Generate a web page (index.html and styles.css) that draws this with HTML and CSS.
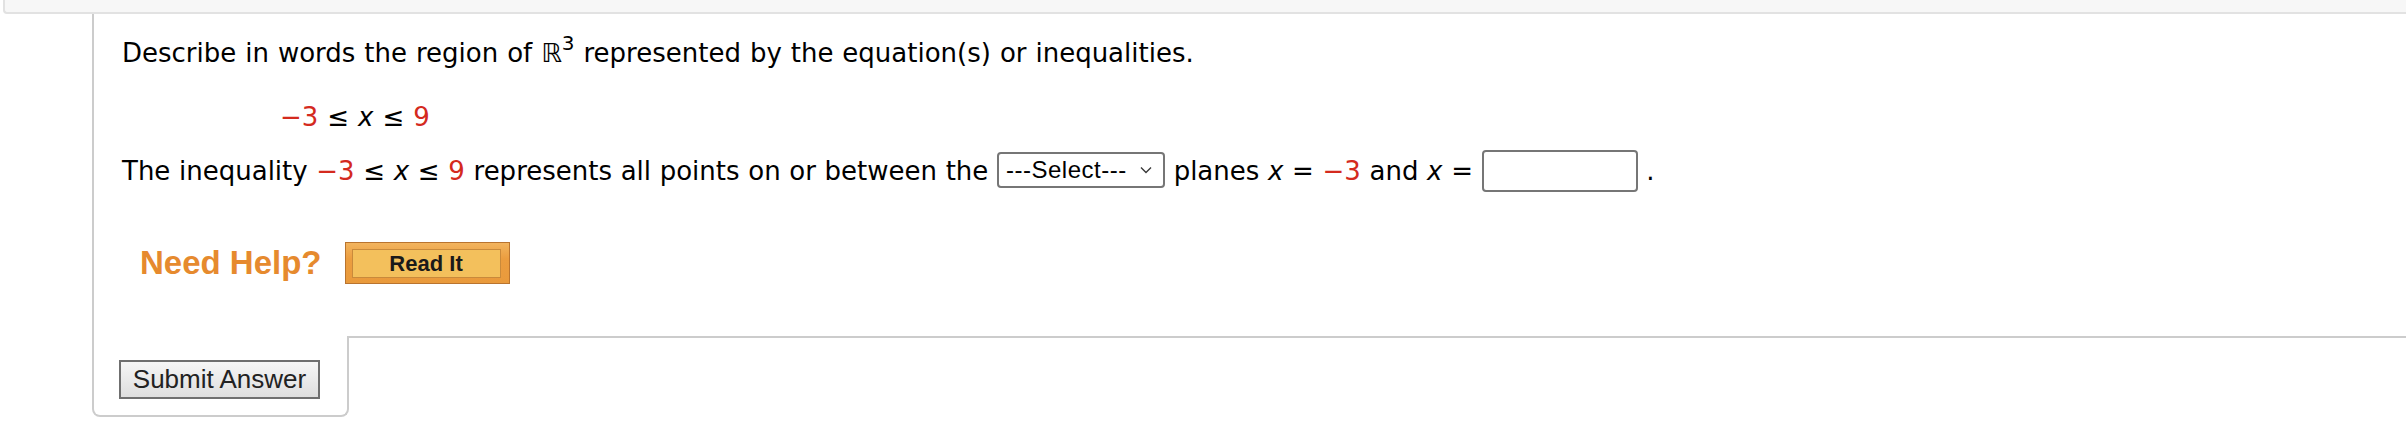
FILE: index.html
```html
<!DOCTYPE html>
<html lang="en">
<head>
<meta charset="utf-8">
<title>Question</title>
<link rel="stylesheet" href="styles.css">
</head>
<body>
<div class="topbar"></div>
<div class="card">
  <div class="question">
    <p class="prompt">Describe in words the region of <span class="bb">ℝ</span><sup class="sup">3</sup> represented by the equation(s) or inequalities.</p>
    <p class="eq"><span class="red">−3</span> ≤ <i>x</i> ≤ <span class="red">9</span></p>
    <p class="answer">The inequality <span class="red">−3</span> ≤ <i>x</i> ≤ <span class="red">9</span> represents all points on or between the <span class="select"><span class="select-text">---Select---</span><svg class="chev" width="12" height="8" viewBox="0 0 12 8"><polyline points="1,1.5 6,6.5 11,1.5" fill="none" stroke="#3a3a3a" stroke-width="1.4"/></svg></span> planes <i>x</i> = <span class="red">−3</span> and <i>x</i> = <span class="input"></span> .</p>
    <div class="help">
      <span class="need">Need Help?</span>
      <span class="readit"><span class="readit-inner">Read It</span></span>
    </div>
  </div>
  <div class="bottom">
    <div class="submit-area"><button class="submit" type="button">Submit Answer</button></div>
    <div class="extra"></div>
  </div>
</div>
</body>
</html>
```
FILE: styles.css
```css
html, body {
  margin: 0;
  padding: 0;
  background: #ffffff;
}
body {
  font-family: "DejaVu Sans", Verdana, sans-serif;
  font-size: 26px;
  color: #000000;
  overflow: hidden;
  width: 2406px;
  height: 425px;
}
.topbar {
  height: 12px;
  margin-left: 3px;
  background: #f7f7f7;
  border-left: 2px solid #e2e2e2;
  border-bottom: 2px solid #e2e2e2;
  border-bottom-left-radius: 4px;
}
.card {
  margin-left: 92px;
}
.question {
  border-left: 2px solid #cccccc;
  padding: 24px 0 0 28px;
  height: 322px;
  box-sizing: border-box;
  word-spacing: 0.7px;
}
.question p {
  margin: 0;
}
.prompt {
  line-height: 30px;
}
.bb {
  font-family: "DejaVu Sans", sans-serif;
  font-weight: normal;
}
.sup {
  font-size: 20px;
  line-height: 0;
  vertical-align: 12px;
}
.eq {
  margin-top: 34px !important;
  padding-left: 158px;
  line-height: 30px;
}
.red {
  color: #d42a1e;
}
i {
  font-style: italic;
}
.answer {
  margin-top: 18px !important;
  line-height: 30px;
  word-spacing: 0.4px;
}
.select {
  display: inline-flex;
  align-items: center;
  justify-content: space-between;
  box-sizing: border-box;
  width: 168px;
  height: 36px;
  border: 2px solid #767676;
  border-radius: 4px;
  padding: 0 11px 0 7px;
  font-family: "Liberation Sans", Arial, sans-serif;
  font-size: 24px;
  letter-spacing: 0.5px;
  word-spacing: 0;
  line-height: 32px;
  vertical-align: 2px;
  color: #000;
  background: #fff;
}
.chev {
  display: block;
}
.input {
  display: inline-block;
  box-sizing: border-box;
  width: 156px;
  height: 42px;
  border: 2px solid #767676;
  border-radius: 4px;
  vertical-align: -12px;
  background: #fff;
}
.help {
  display: flex;
  align-items: center;
  margin-top: 50px;
  padding-left: 18px;
  gap: 23px;
  height: 42px;
  word-spacing: 0;
}
.need {
  font-family: "Liberation Sans", Arial, sans-serif;
  font-weight: bold;
  font-size: 33px;
  line-height: 42px;
  color: #e68a2e;
}
.readit {
  display: flex;
  box-sizing: border-box;
  width: 165px;
  height: 42px;
  padding: 6px 8px 5px 6px;
  border: 1px solid #b9742f;
  background: linear-gradient(#f2b45e, #eb9d3f 40%, #e99a3c);
}
.readit-inner {
  flex: 1;
  display: flex;
  align-items: center;
  justify-content: center;
  border: 1px solid #c98a3b;
  background: #f3c05c;
  font-family: "Liberation Sans", Arial, sans-serif;
  font-weight: bold;
  font-size: 22px;
  color: #1a1a1a;
}
.bottom {
  display: flex;
  height: 81px;
}
.submit-area {
  box-sizing: border-box;
  width: 257px;
  height: 81px;
  border-left: 2px solid #cccccc;
  border-right: 2px solid #cccccc;
  border-bottom: 2px solid #cccccc;
  border-bottom-left-radius: 8px;
  border-bottom-right-radius: 8px;
  padding: 24px 0 0 25px;
}
.submit {
  display: block;
  box-sizing: border-box;
  width: 201px;
  height: 39px;
  margin: 0;
  padding: 0;
  border: 2px solid #6f6f6f;
  border-radius: 0;
  background: linear-gradient(#f6f6f6, #dedede);
  font-family: "Liberation Sans", Arial, sans-serif;
  font-size: 26px;
  color: #222222;
}
.extra {
  flex: 1;
  border-top: 2px solid #cccccc;
}
```
